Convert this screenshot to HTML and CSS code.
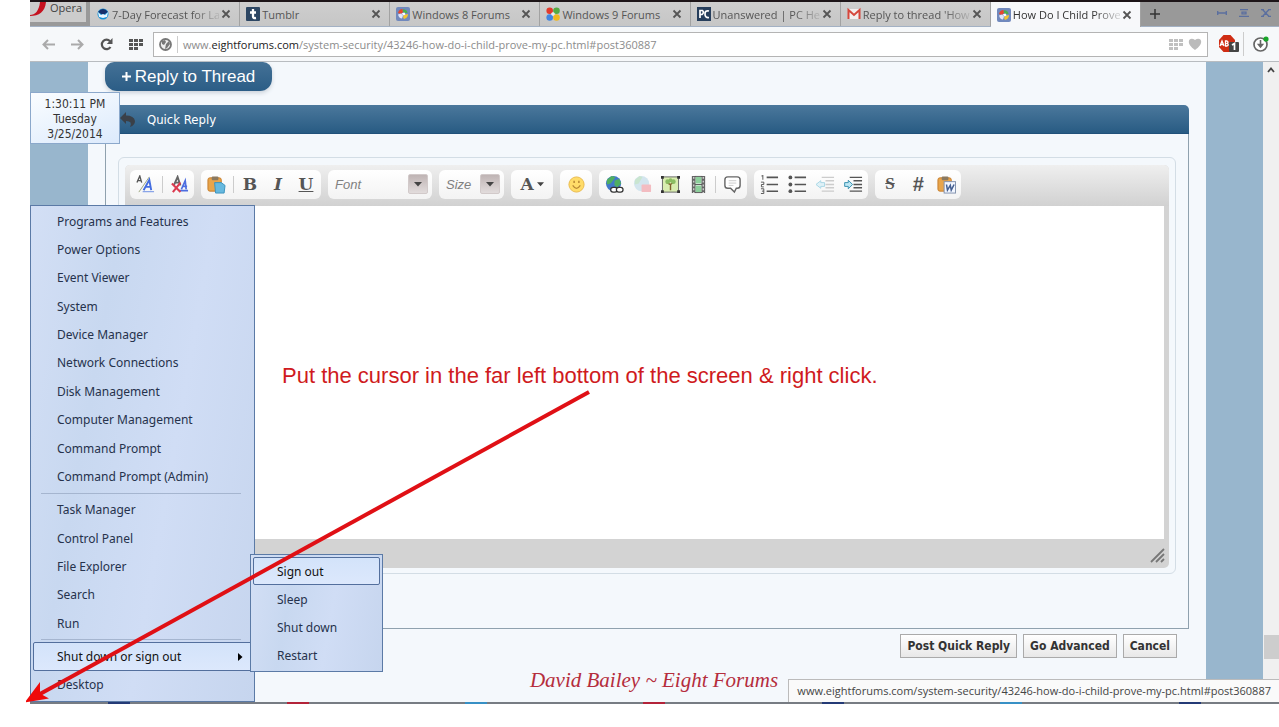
FILE: index.html
```html
<!DOCTYPE html>
<html lang="en">
<head>
<meta charset="utf-8">
<title>How Do I Child Prove My PC</title>
<link rel="stylesheet" href="styles.css">
</head>
<body>
<svg class="defs" aria-hidden="true">
  <symbol id="close" viewBox="0 0 10 10"><path d="M1.5 1.5l7 7m0-7l-7 7" stroke="#555" stroke-width="1.8" fill="none"/></symbol>
  <symbol id="eight" viewBox="0 0 14 14"><rect width="14" height="14" rx="2" fill="#7189bd"/><path d="M6.500 2Q3 2 2 6l3 1 2-2z" fill="#e8452c"/><path d="M7.500 2q4 1 4 4l-3 0-2-2z" fill="#4bb04b"/><path d="M2 7.500l3-1 2 2-1 3q-3 0-4-4z" fill="#dfe6fb"/><path d="M8 8l4-1q0 4-4 5l-1-2z" fill="#f4c430"/><path d="M5.500 6.500l3-1 1 2-2 1z" fill="#fff"/></symbol>
  <symbol id="caret" viewBox="0 0 8 5"><path d="M0 0h8L4 4.500z" fill="#444"/></symbol>
  <symbol id="board" viewBox="0 0 20 20"><rect x="1" y="3" width="14" height="14" rx="2" fill="#e8a54b" stroke="#c67b29"/><rect x="5" y="1.500" width="7" height="4" rx="1" fill="#8a7960"/></symbol>
</svg>
<main class="desktop">
  <header class="tabbar">
    <button class="opera"><svg width="16" height="15" viewBox="0 0 16 15"><path d="M0 13c5 0 9-4 10-13h6c-1 10-7 14-16 14z" fill="#c51220"/></svg>Opera</button>
    <nav class="tabs">
      <div class="tab"><svg class="fav" viewBox="0 0 14 14"><circle cx="7" cy="7" r="5.500" fill="#1592d6"/><path d="M2 5q5-6 10 0L7 8z" fill="#17306b"/><path d="M2 5l3 3 2-1 2 1 3-3-1 5-4 1-4-1z" fill="#e8f5ff"/><path d="M3 10q4 3 8 0l-4 2z" fill="#1592d6"/></svg><span class="fade">7-Day Forecast for La</span><button class="x" aria-label="Close tab"><svg><use href="#close"/></svg></button></div>
      <div class="tab"><svg class="fav" viewBox="0 0 14 14"><rect width="14" height="14" rx="1" fill="#2c4663"/><path d="M7 2v7.500q0 2 3 1.500M4 5.500h6" stroke="#fff" stroke-width="2.300" fill="none"/></svg><span>Tumblr</span><button class="x" aria-label="Close tab"><svg><use href="#close"/></svg></button></div>
      <div class="tab"><svg class="fav"><use href="#eight"/></svg><span>Windows 8 Forums</span><button class="x" aria-label="Close tab"><svg><use href="#close"/></svg></button></div>
      <div class="tab"><svg class="fav" viewBox="0 0 14 14"><circle cx="3.700" cy="3.700" r="3.300" fill="#e23a2c"/><circle cx="10.500" cy="3.700" r="3.300" fill="#54ab43"/><circle cx="3.700" cy="10.500" r="3.300" fill="#4285e0"/><circle cx="10.500" cy="10.500" r="3.300" fill="#f0b81e"/><circle cx="7" cy="7" r="1.800" fill="#eee"/></svg><span>Windows 9 Forums</span><button class="x" aria-label="Close tab"><svg><use href="#close"/></svg></button></div>
      <div class="tab"><svg class="fav" viewBox="0 0 14 14"><rect width="14" height="14" fill="#263e5c"/><path d="M3 11V3.500h2.500q2 2-.5 4H3M12 4q-4-1-4 3t4 3.500" stroke="#fff" stroke-width="1.700" fill="none"/></svg><span class="fade">Unanswered | PC He</span><button class="x" aria-label="Close tab"><svg><use href="#close"/></svg></button></div>
      <div class="tab"><svg class="fav" viewBox="0 0 14 14"><rect x="1" y="2" width="12" height="10" fill="#f3eeee"/><path d="M1.500 12V3L7 8l5.500-5v9" fill="none" stroke="#d6473c" stroke-width="2"/></svg><span class="fade">Reply to thread 'How</span><button class="x" aria-label="Close tab"><svg><use href="#close"/></svg></button></div>
      <div class="tab active"><svg class="fav"><use href="#eight"/></svg><span class="fade">How Do I Child Prove</span><button class="x" aria-label="Close tab"><svg><use href="#close"/></svg></button></div>
    </nav>
    <button class="plus" aria-label="New tab"><svg width="10" height="10" viewBox="0 0 10 10"><path d="M5 0v10M0 5h10" stroke="#333" stroke-width="1.500"/></svg></button>
    <div class="wincontrols">
      <button aria-label="Minimize"><svg width="10" height="8" viewBox="0 0 10 8"><path d="M0 4h10M.7 2v4M9.300 2v4" stroke="#5b6f9f" stroke-width="1.400"/></svg></button>
      <button aria-label="Restore"><svg width="10" height="8" viewBox="0 0 10 8"><path d="M1 .7h8M0 7.300h10M3 3.200h4v1.600H3z" stroke="#5b6f9f" stroke-width="1.300" fill="none"/></svg></button>
      <button aria-label="Close"><svg width="10" height="8" viewBox="0 0 10 8"><path d="M1 0l7.500 8M8.500 0L1 8M0 .6h3m4 0h3M0 7.400h3m4 0h3" stroke="#5b6f9f" stroke-width="1.400"/></svg></button>
    </div>
  </header>

  <div class="addressbar">
    <button aria-label="Back"><svg width="13" height="11" viewBox="0 0 13 11"><path d="M13 5.500H2M6 1L1.500 5.500 6 10" stroke="#aaa" stroke-width="2" fill="none"/></svg></button>
    <button aria-label="Forward"><svg width="13" height="11" viewBox="0 0 13 11"><path d="M0 5.500h11M7 1l4.500 4.500L7 10" stroke="#aaa" stroke-width="2" fill="none"/></svg></button>
    <button aria-label="Reload"><svg width="13" height="13" viewBox="0 0 13 13"><path d="M10.500 9A4.700 4.700 0 1 1 10 3.200" stroke="#555" stroke-width="2.200" fill="none"/><path d="M12.500 0v6H6.800z" fill="#555"/></svg></button>
    <button aria-label="Speed dial"><svg width="14" height="11" viewBox="0 0 14 11"><path d="M0 1.500h14M0 5.500h14M0 9.500h9" stroke="#555" stroke-width="3" stroke-dasharray="4 1"/></svg></button>
    <div class="urlbox">
      <svg width="13" height="13" viewBox="0 0 13 13"><circle cx="6.500" cy="6.500" r="5.500" fill="#eee" stroke="#777" stroke-width="1.800"/><path d="M3 3l3-1 1 2-2 3-2-1zM7 6l3-3 1 3-3 4-2 1z" fill="#777"/></svg>
      <a class="url" href="#">www.<b>eightforums.com</b>/system-security/43246-how-do-i-child-prove-my-pc.html#post360887</a>
      <svg width="14" height="11" viewBox="0 0 14 11"><path d="M0 1.500h14M0 5.500h14M0 9.500h9" stroke="#c0c0c0" stroke-width="3" stroke-dasharray="4 1"/></svg>
      <svg width="14" height="12" viewBox="0 0 14 12"><path d="M7 12C-4 4 2-2 7 2c5-4 11 2 0 10z" fill="#bbb"/></svg>
    </div>
    <button class="ext" aria-label="AdBlock, 1 blocked"><svg width="21" height="18" viewBox="0 0 21 18"><path d="M5.500 0h7L17 5v7l-4.500 5h-7L1 12V5z" fill="#cf2d14"/><path d="M2 11l2-5 2 5M3 9.500h2.500M7.500 11V6h1.500q2 1 0 2.500 2.500 1 0 2.500z" stroke="#fff" stroke-width="1.300" fill="none"/><rect x="11" y="7" width="10" height="10" rx="1" fill="#444"/><path d="M14 10l2.500-1.500V15" stroke="#fff" stroke-width="1.700" fill="none"/></svg></button>
    <button class="ext dl" aria-label="Downloads"><svg width="16" height="16" viewBox="0 0 16 16"><circle cx="7.500" cy="8.500" r="6.500" fill="#fff" stroke="#666" stroke-width="1.700"/><path d="M7.500 4v7M5.500 8.500l2 2.500 2-2.500z" stroke="#666" stroke-width="1.600" fill="#666"/><circle cx="13" cy="3" r="2.600" fill="#19a52a"/></svg></button>
  </div>

  <div class="viewport">
    <div class="content">
      <button class="reply"><svg width="9" height="9" viewBox="0 0 9 9"><path d="M4.500 0v9M0 4.500h9" stroke="#fff" stroke-width="2"/></svg>Reply to Thread</button>
      <section class="panel">
        <h2><svg width="15" height="15" viewBox="0 0 15 15"><path d="M0 6l6-6v3.500q8 0 9 5.500 0 4-5 6 3-6-4-6v3z" fill="#3a4048"/></svg>Quick Reply</h2>
        <div class="panelbody">
          <div class="editorframe">
            <div class="editor">
              <div class="tools">
                <div class="group">
                  <button aria-label="Remove formatting"><svg viewBox="0 0 20 20"><path d="M1 8l3-7 2 7M2 6h4" stroke="#555" stroke-width="1.400" fill="none"/><path d="M3 18L14 2" stroke="#9aa47c"/><path d="M8 16l6-11 2 11M10.500 12.500h5" stroke="#446de0" stroke-width="2" fill="none"/><path d="M7 17.500h12" stroke="#8aa5e8" stroke-width="1.500"/></svg></button>
                  <i></i>
                  <button aria-label="Switch editor mode"><svg viewBox="0 0 20 20"><path d="M4 11l4-9 3 9M5 8h5" stroke="#666" stroke-width="2" fill="none"/><path d="M12 15l4-9 1 9M13 12h5M10 16.500h9" stroke="#4d6de0" stroke-width="1.800" fill="none"/><path d="M2 9l9 9M11 8L3 18" stroke="#dc3b50" stroke-width="2.200"/></svg></button>
                </div>
                <div class="group">
                  <button aria-label="Paste"><svg viewBox="0 0 20 20"><use href="#board"/><path d="M8 8h7l4 3-1 8H9z" fill="#66b9df" stroke="#3b92bd"/></svg></button>
                  <i></i>
                  <button class="glyph">B</button>
                  <button class="glyph it">I</button>
                  <button class="glyph un">U</button>
                </div>
                <label class="group combo font"><select aria-label="Font"><option>Font</option></select><span><svg width="8" height="5"><use href="#caret"/></svg></span></label>
                <label class="group combo size"><select aria-label="Size"><option>Size</option></select><span><svg width="8" height="5"><use href="#caret"/></svg></span></label>
                <div class="group"><button class="glyph colour">A<svg class="small"><use href="#caret"/></svg></button></div>
                <div class="group smile"><button aria-label="Smilies"><svg viewBox="0 0 20 20"><circle cx="10" cy="10" r="8" fill="#ffdc69" stroke="#e9b94c"/><path d="M6 11q4 6 8 0" stroke="#b98a35" stroke-width="1.400" fill="none"/><path d="M7.500 6v2.500M12.500 6v2.500" stroke="#b98a35" stroke-width="1.600"/></svg></button></div>
                <div class="group">
                  <button aria-label="Insert link"><svg viewBox="0 0 20 20"><circle cx="9" cy="9" r="8" fill="#4278c9"/><path d="M2 5l5-4 4 1-2 3-3 4-4 1zM10 6l5-2 2 5-4 4-3-2z" fill="#4fae61"/><rect x="6" y="13" width="7" height="5" rx="2.500" fill="#fff" stroke="#333" stroke-width="1.300"/><rect x="12" y="13" width="7" height="5" rx="2.500" fill="#fff" stroke="#333" stroke-width="1.300"/></svg></button>
                  <button aria-label="Remove link"><svg viewBox="0 0 20 20"><circle cx="9" cy="9" r="8" fill="#d3e5ee"/><path d="M2 5l5-4 3 1-4 7-4 1z" fill="#c9e5d0"/><rect x="9" y="10" width="10" height="8" rx="1" fill="#f3bcc1"/></svg></button>
                  <button aria-label="Insert image"><svg viewBox="0 0 20 20"><rect x="1.500" y="2" width="17" height="16" fill="#d9edb0" stroke="#666"/><path d="M10 16v-6l-4-2m4 2l4-3" stroke="#80602d" stroke-width="1.500" fill="none"/><circle cx="7" cy="7" r="2.500" fill="#8bbd62"/><circle cx="10" cy="5.500" r="2" fill="#8bbd62"/><circle cx="13" cy="7" r="2.500" fill="#8bbd62"/><path d="M0 1h3v3H0zM17 1h3v3h-3zM0 16h3v3H0zM17 16h3v3h-3z" fill="#333"/></svg></button>
                  <button aria-label="Insert video"><svg viewBox="0 0 20 20"><path d="M3 1h4v18H3zM13 1h4v18h-4z" fill="#666"/><path d="M7 2h6v7H7zM7 11h6v7H7z" fill="#8ccf9b"/><path d="M6 1.500h8M6 10h8M6 18.500h8" stroke="#555"/><path d="M5 2v17M15 2v17" stroke="#ddd" stroke-width="1.300" stroke-dasharray="2 2"/></svg></button>
                  <i></i>
                  <button aria-label="Quote"><svg viewBox="0 0 20 20"><path d="M5 2h10q3 0 3 3v6q0 3-3 3h-1l-2 4-4-4H5q-3 0-3-3V5q0-3 3-3z" fill="#fff" stroke="#666" stroke-width="1.500"/><path d="M6 6h8M6 8.500h8M6 11h5" stroke="#ccc"/></svg></button>
                </div>
                <div class="group">
                  <button aria-label="Numbered list"><svg viewBox="0 0 20 20"><path d="M7 2.500h12M7 10h12M7 17h12" stroke="#555" stroke-width="1.600"/><path d="M3 0v5M1.500 1H3M1 7.500h3V10H1.500v2.500H4M1 14.500h3v5H1M2 17h2" stroke="#555" fill="none"/></svg></button>
                  <button aria-label="Bulleted list"><svg viewBox="0 0 20 20"><path d="M7 2.500h12M7 10h12M7 17h12" stroke="#555" stroke-width="1.600"/><circle cx="2.500" cy="2.500" r="2" fill="#555"/><circle cx="2.500" cy="10" r="2" fill="#555"/><circle cx="2.500" cy="17" r="2" fill="#555"/></svg></button>
                  <button aria-label="Decrease indent"><svg viewBox="0 0 20 20"><path d="M6 2.500h13M10 6h9M10 10h9M10 13.500h9M6 17h13" stroke="#ccc" stroke-width="1.500"/><path d="M0 10l5-4v2h4v4H5v2z" fill="#dff1f7" stroke="#a8d6e5"/></svg></button>
                  <button aria-label="Increase indent"><svg viewBox="0 0 20 20"><path d="M6 2.500h13M10 6h9M10 10h9M10 13.500h9M6 17h13" stroke="#555" stroke-width="1.500"/><path d="M9 10L4.500 5.500V8H.7v4h3.800v2.500z" fill="#bfe8f5" stroke="#368fae"/></svg></button>
                </div>
                <div class="group">
                  <button class="glyph strike">S</button>
                  <button class="glyph hash">#</button>
                  <button aria-label="Paste from Word"><svg viewBox="0 0 20 20"><use href="#board"/><rect x="7.500" y="7" width="12" height="12" fill="#f2f6ff" stroke="#8191ad"/><path d="M10 10l1 6 3-5 1 5 3-6" fill="none" stroke="#445f91" stroke-width="1.600"/></svg></button>
                </div>
              </div>
              <textarea aria-label="Message"></textarea>
              <div class="editorfoot"><svg width="15" height="15" viewBox="0 0 15 15"><path d="M1 14L14 1M6 14l8-8M11 14l3-3" stroke="#777" stroke-width="1.800"/></svg></div>
            </div>
          </div>
        </div>
      </section>
      <div class="actions"><button>Post Quick Reply</button><button>Go Advanced</button><button>Cancel</button></div>
      <p class="signature">David Bailey ~ Eight Forums</p>
    </div>
    <div class="scrollbar"><svg width="8" height="6" viewBox="0 0 8 6"><path d="M1 5l3-3.500L7 5" stroke="#444" stroke-width="1.800" fill="none"/></svg><div class="thumb"></div></div>
  </div>
  <div class="taskbar"><i></i><i></i><i></i><i></i><i></i><i></i><i></i></div>

  <output class="status">www.eightforums.com/system-security/43246-how-do-i-child-prove-my-pc.html#post360887</output>
  <div class="clock">1:30:11 PM<br>Tuesday<br>3/25/2014</div>
  <p class="note">Put the cursor in the far left bottom of the screen &amp; right click.</p>
  <div class="menu main">
    <button>Programs and Features</button><button>Power Options</button><button>Event Viewer</button><button>System</button><button>Device Manager</button><button>Network Connections</button><button>Disk Management</button><button>Computer Management</button><button>Command Prompt</button><button>Command Prompt (Admin)</button>
    <hr>
    <button>Task Manager</button><button>Control Panel</button><button>File Explorer</button><button>Search</button><button>Run</button>
    <hr>
    <button class="on">Shut down or sign out<svg width="5" height="8" viewBox="0 0 5 8"><path d="M0 0l4.500 4L0 8z" fill="#000"/></svg></button><button>Desktop</button>
  </div>
  <div class="menu sub"><button class="on">Sign out</button><button>Sleep</button><button>Shut down</button><button>Restart</button></div>
  <svg class="pointer" viewBox="0 0 566 316" aria-hidden="true"><path d="M563 4L14 306" stroke="#e01015" stroke-width="4"/><path d="M1 313l12-16 0 9 7 4z" fill="#f00a0a" stroke="#f00a0a" stroke-width="2"/></svg>
</main>
</body>
</html>
```
FILE: styles.css
```css
* { box-sizing: border-box; }
body { margin: 0; background: #fff; font-family: "Noto Sans", "Open Sans", sans-serif; }
button, select, textarea { font: inherit; color: inherit; border: 0; padding: 0; margin: 0; background: none; border-radius: 0; }
a { color: inherit; text-decoration: none; }
.defs { position: absolute; width: 0; height: 0; }
.desktop { position: relative; margin-left: 30px; }

.tabbar { display: flex; height: 27px; border-top: 2px solid #1d1518; background: #999; border-bottom: 1px solid #a3b1c4; font-family: "Open Sans", "Noto Sans", sans-serif; font-size: 11px; color: #555; }
.opera { display: flex; width: 57px; height: 21px; gap: 4px; background: #ccc; border: 1px solid #999; border-left: 0; border-top: 0; line-height: 12px; font-size: 11px; color: #444; margin-right: 3px; }
.opera svg { flex: none; }
.tabs { display: flex; flex: 0 1 1051px; min-width: 0; }
.tab { flex: 1; min-width: 0; display: flex; align-items: center; gap: 2px; padding: 0 8px 0 6px; background: linear-gradient(#cecece, #c6c6c6); border-right: 1px solid #a2a2a2; }
.tab.active { background: #f7f8fa; color: #333; margin-bottom: -1px; }
.tab span { flex: 1; min-width: 0; overflow: hidden; white-space: nowrap; }
.tab .fade { mask-image: linear-gradient(90deg, #000 75%, transparent 105%); }
.fav { width: 14px; height: 14px; flex: none; }
.x, .x svg { display: block; width: 10px; height: 10px; flex: none; }
.plus { width: 28px; }
.wincontrols { margin-left: auto; display: flex; align-items: center; gap: 12px; padding: 0 8px 3px 0; }
.wincontrols button, .plus, .addressbar button { display: flex; align-items: center; justify-content: center; }

.addressbar { display: flex; align-items: center; height: 35px; padding: 0 10px 0 4px; background: #f6f8fa; border-bottom: 1px solid #b8bcc0; }
.addressbar > button { width: 29px; height: 24px; }
.urlbox { flex: 1; min-width: 0; display: flex; align-items: center; height: 25px; margin: 0 9px 0 3px; padding: 0 5px; gap: 5px; background: #fff; border: 1px solid #b4b4b4; }
.url { flex: 1; overflow: hidden; white-space: nowrap; font-family: "Open Sans", "Noto Sans", sans-serif; font-size: 11px; line-height: 17px; color: #8c8c8c; padding-left: 5px; border-left: 1px solid #ccc; }
.url b { font-weight: 400; color: #222; }
.addressbar > .ext { width: 22px; }
.addressbar > .dl { width: 26px; border-left: 1px solid #ccc; margin-left: 4px; padding-left: 8px; }

.viewport { display: flex; background: #98b6cd; }
.content { flex: 1; min-width: 0; margin: 0 57px 0 58px; padding: 0 17px; background: #f4f8fc; }
.reply { display: flex; align-items: center; justify-content: center; gap: 4px; width: 167px; height: 29px; border-radius: 9px 9px 12px 12px; background: linear-gradient(#447196, #2b5d86); color: #fff; font: 17px "Liberation Sans", Arial, sans-serif; box-shadow: 0 2px 4px #cbd2da; }
.panel { margin-top: 14px; }
.panel h2 { display: flex; align-items: center; gap: 12px; height: 29px; margin: 0; padding-left: 15px; border-radius: 5px 5px 0 0; background: linear-gradient(#4b789c, #285b83); color: #fff; font: 13px "DejaVu Sans Condensed", Tahoma, sans-serif; border-bottom: 1px solid #21517a; }
.panelbody { padding: 23px 12px 54px; border: 1px solid #8fa1ae; border-top: 0; }
.editorframe { padding: 7px 6px 5px; border: 1px solid #d3dde5; border-radius: 6px; }
.editor { display: flex; flex-direction: column; border-radius: 5px; background: #d3d3d3; overflow: hidden; }
.tools { display: flex; align-items: center; gap: 7px; height: 41px; padding: 0 5px 3px; background: linear-gradient(#efefef, #d1d1d1); }
.group { display: flex; align-items: center; height: 29px; padding: 0 1px; border-radius: 6px; background: linear-gradient(#fff, #f3f3f3); }
.group button { display: flex; align-items: center; justify-content: center; width: 28px; height: 28px; }
.group button svg { width: 19px; height: 19px; }
.group > i { width: 1px; height: 17px; margin: 0 2px 0 3px; background: #ccc; }
.group .glyph { font: bold 17px "DejaVu Serif", "Liberation Serif", serif; color: #555; }
.group .it { font-style: italic; }
.group .un { text-decoration: underline; }
.group .strike { font-family: "Liberation Serif", serif; text-decoration: line-through; }
.group .hash { font-family: "Liberation Sans", sans-serif; font-style: italic; font-size: 20px; }
.group .colour { width: 40px; gap: 3px; }
.group .colour .small { width: 7px; height: 5px; }
.group.smile { padding: 0 2px; }
.group.combo { color: #808080; font: italic 13px "Liberation Sans", Arial, sans-serif; padding: 0 4px 0 7px; }
.combo select { appearance: none; flex: 1; min-width: 0; height: 27px; }
.combo span { display: flex; align-items: center; justify-content: center; width: 20px; height: 20px; background: linear-gradient(#bfb4b4, #e2dcdc); border: 1px solid #d2caca; border-radius: 2px; pointer-events: none; }
.combo.font { width: 104px; }
.combo.size { width: 65px; }
textarea { display: block; height: 333px; margin: 0 5px; background: #fff; resize: none; outline: 0; }
.editorfoot { display: flex; justify-content: flex-end; align-items: center; height: 29px; padding: 3px 4px 0; }
.actions { display: flex; justify-content: flex-end; gap: 6px; padding: 5px 12px 0; }
.actions button { height: 24px; padding: 0 6px; border: 1px solid #aaa; background: linear-gradient(#fff, #e8e8e8); color: #333; font: bold 12px "DejaVu Sans Condensed", Tahoma, sans-serif; }
.signature { margin: 0 0 0 14px; padding: 8px 0; text-align: center; font: italic 21px/28px "Liberation Serif", "Times New Roman", serif; color: #b52d3c; }
.scrollbar { display: flex; flex-direction: column; align-items: center; width: 16px; background: #f0f0f0; padding-top: 5px; }
.thumb { width: 15px; height: 24px; margin-top: auto; margin-bottom: 43px; background: #cdcdcd; }
.taskbar { display: flex; justify-content: space-around; height: 2px; background: #777c83; }
.taskbar i { width: 22px; background: #243a76; }
.taskbar i:nth-child(even) { background: #b32339; }
.taskbar i:nth-child(3n) { background: #3790c5; }

.status { position: absolute; right: 0; bottom: 2px; height: 23px; padding: 0 8px; background: #fafafa; border: 1px solid #bbb; border-width: 1px 0 0 1px; font-family: "Open Sans", "Noto Sans", sans-serif; font-size: 11px; line-height: 21px; color: #444; white-space: nowrap; }
.clock { position: absolute; left: 0; top: 92px; width: 90px; height: 52px; padding-top: 4px; border: 1px solid #8ba8cb; background: linear-gradient(160deg, #fafdff, #dceafc); text-align: center; font: 12px/15px "DejaVu Sans Condensed", Tahoma, sans-serif; color: #333; }
.note { position: absolute; left: 252px; top: 362px; margin: 0; font: 22px/28px "Liberation Sans", Arial, sans-serif; color: #cf1a20; white-space: nowrap; }
.menu { position: absolute; display: flex; flex-direction: column; padding: 1px 2px 2px; border: 1px solid #5b7aa6; background: linear-gradient(100deg, #d3dff5, #c8d8f0 30%, #d0ddf5 60%, #c6d5ee); color: #26324c; font-size: 12px; }
.menu button { display: flex; flex: 1; align-items: center; min-height: 28px; padding-left: 23px; border: 1px solid transparent; border-radius: 2px; text-align: left; white-space: nowrap; }
.menu hr { width: 200px; height: 1px; margin: 2px 8px; border: 0; background: #a5b5cf; }
.menu .on { color: #111; border-color: #536f9d; background: linear-gradient(#d3e3fa, #dce8fc); }
.menu .on svg { margin-left: auto; margin-right: 8px; }
.main { left: 0; top: 205px; bottom: 2px; width: 225px; }
.sub { left: 220px; top: 554px; width: 133px; padding: 2px; }
.pointer { position: absolute; left: -4px; top: 388px; width: 566px; height: 316px; pointer-events: none; }
```
